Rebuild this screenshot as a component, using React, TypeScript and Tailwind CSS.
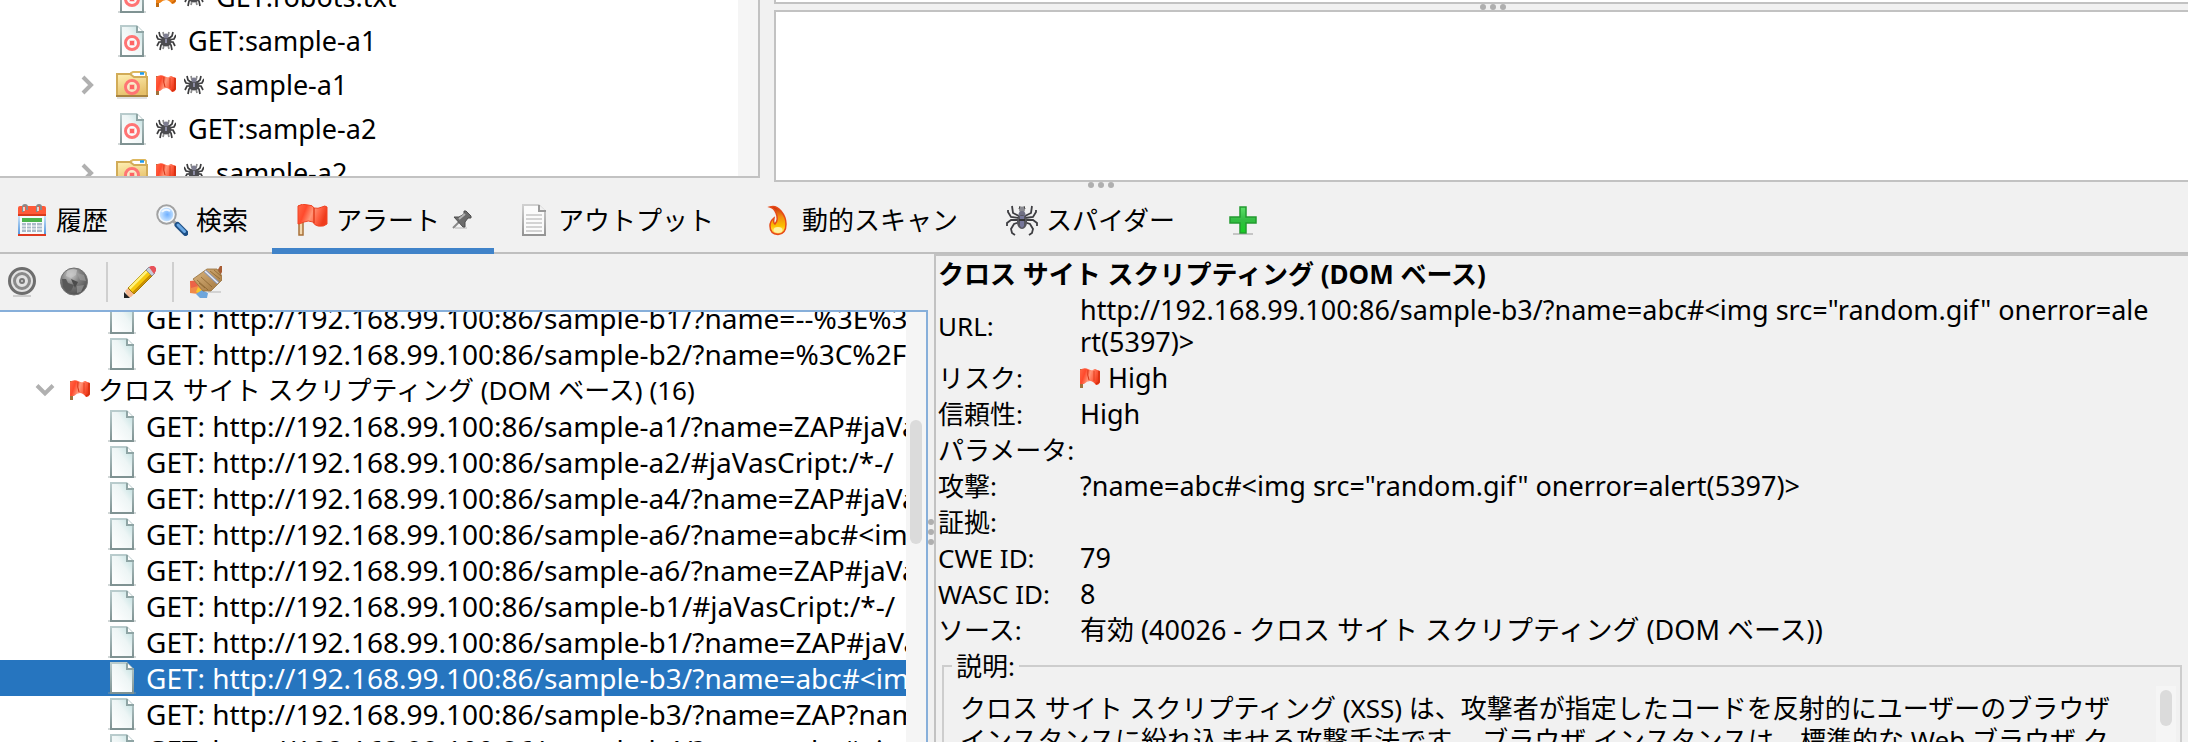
import React from "react";

type IconProps = { className?: string };

function Gradients() {
  return (
    <svg className="absolute h-0 w-0" aria-hidden="true">
      <defs>
        <linearGradient id="paper" x1="1" y1="0" x2="0.1" y2="0.9">
          <stop offset="0" stopColor="#b9dcdc" />
          <stop offset="0.45" stopColor="#edf5f5" />
          <stop offset="1" stopColor="#ffffff" />
        </linearGradient>
        <linearGradient id="paperEdge" x1="0" y1="0" x2="0" y2="1">
          <stop offset="0" stopColor="#b9cccd" />
          <stop offset="1" stopColor="#7f9292" />
        </linearGradient>
        <linearGradient id="grayEdge" x1="0" y1="0" x2="0" y2="1">
          <stop offset="0" stopColor="#d0d0d0" />
          <stop offset="1" stopColor="#949494" />
        </linearGradient>
        <linearGradient id="folder" x1="0" y1="0" x2="0.3" y2="1">
          <stop offset="0" stopColor="#fff0b4" />
          <stop offset="1" stopColor="#e6c06a" />
        </linearGradient>
        <linearGradient id="redFlag" x1="0" y1="0" x2="1" y2="0.3">
          <stop offset="0" stopColor="#ff6a4a" />
          <stop offset="0.3" stopColor="#ff4a2c" />
          <stop offset="0.55" stopColor="#ff9678" />
          <stop offset="0.78" stopColor="#ff6446" />
          <stop offset="1" stopColor="#f03c1c" />
        </linearGradient>
        <linearGradient id="calBody" x1="0" y1="0" x2="0" y2="1">
          <stop offset="0" stopColor="#cfe6fa" />
          <stop offset="1" stopColor="#4f93dc" />
        </linearGradient>
        <radialGradient id="lens" cx="0.55" cy="0.5" r="0.6">
          <stop offset="0" stopColor="#6fb0ff" />
          <stop offset="0.5" stopColor="#b4d8ff" />
          <stop offset="1" stopColor="#e6f4ff" />
        </radialGradient>
        <linearGradient id="flame" x1="0" y1="0" x2="0" y2="1">
          <stop offset="0" stopColor="#c8280e" />
          <stop offset="0.35" stopColor="#f08a10" />
          <stop offset="0.7" stopColor="#fcc000" />
          <stop offset="0.85" stopColor="#ffe040" />
          <stop offset="1" stopColor="#ff9030" />
        </linearGradient>
        <linearGradient id="plus" x1="0" y1="0" x2="0" y2="1">
          <stop offset="0" stopColor="#5ce06a" />
          <stop offset="0.5" stopColor="#34bc44" />
          <stop offset="1" stopColor="#14d020" />
        </linearGradient>
        <radialGradient id="globe" cx="0.38" cy="0.25" r="0.8">
          <stop offset="0" stopColor="#cccccc" />
          <stop offset="0.45" stopColor="#808080" />
          <stop offset="1" stopColor="#4c4c4c" />
        </radialGradient>
        <linearGradient id="broom" x1="0" y1="0" x2="1" y2="1">
          <stop offset="0" stopColor="#dcb680" />
          <stop offset="1" stopColor="#a0743c" />
        </linearGradient>
      </defs>
    </svg>
  );
}

function Paper() {
  return (
    <>
      <path d="M2 31h28" stroke="#8d9c9c" strokeOpacity="0.4" strokeWidth="2" />
      <path d="M5 1H20.500L27 7.500V31H5Z" fill="url(#paper)" stroke="url(#paperEdge)" strokeWidth="2" />
      <path d="M21 1V7H27Z" fill="#ffffff" />
      <path d="M21 1V7H28" fill="none" stroke="#8fa5a5" strokeWidth="2" />
    </>
  );
}

function Target({ cy }: { cy: number }) {
  return (
    <>
      <circle cx="16" cy={cy} r="6.500" fill="#ffffff" fillOpacity="0.55" stroke="#ff7474" strokeWidth="3" />
      <rect x="14" y={cy - 2} width="4" height="4" fill="#ff6464" stroke="#ff6464" strokeOpacity="0.35" strokeWidth="1.500" />
    </>
  );
}

function DocIcon({ className }: IconProps) {
  return (
    <svg viewBox="0 0 32 32" className={className} aria-hidden="true">
      <Paper />
    </svg>
  );
}

function TargetDocIcon({ className }: IconProps) {
  return (
    <svg viewBox="0 0 32 32" className={className} aria-hidden="true">
      <Paper />
      <Target cy={18} />
    </svg>
  );
}

function TargetFolderIcon({ className }: IconProps) {
  return (
    <svg viewBox="0 0 32 32" className={className} aria-hidden="true">
      <path d="M1 29h30" stroke="#000" strokeOpacity="0.12" strokeWidth="2" />
      <path d="M15 7V4L17 3H29L30 4V8H15Z" fill="#ffffff" stroke="#ddb860" strokeWidth="2" />
      <path d="M24 4.500h4" stroke="#1e9cf0" strokeWidth="2.500" />
      <path d="M1 5H14L18 8H31V27H1Z" fill="url(#folder)" stroke="#d2ac58" strokeWidth="2" />
      <path d="M0 27H32" stroke="#a88440" strokeWidth="2" />
      <Target cy={18} />
    </svg>
  );
}

function SmallFlagIcon({ className, orange }: IconProps & { orange?: boolean }) {
  return (
    <svg viewBox="0 0 20 20" className={className} aria-hidden="true">
      <path d="M1.500 1V20" stroke={orange ? "#c06a10" : "#a0723c"} strokeWidth="3" />
      <path d="M0 2Q4-1 8 1T13 2Q15 0 17 2Q20 2 20 4V14Q19 17 16 17Q13 13 10 13Q7 13 4 16H0Z" fill={orange ? "#f08418" : "url(#redFlag)"} />
      <path d="M8 2Q7 7 9 12" stroke={orange ? "#c86408" : "#d63214"} strokeWidth="1" fill="none" />
      <path d="M14 3V13" stroke={orange ? "#c86408" : "#e0401e"} strokeWidth="1" fill="none" />
      <path d="M19 3V14L16 16" stroke={orange ? "#c86408" : "#d23010"} strokeWidth="1.500" fill="none" />
    </svg>
  );
}

function SmallSpiderIcon({ className }: IconProps) {
  return (
    <svg viewBox="0 0 20 20" className={className} aria-hidden="true">
      <g fill="none" stroke="#3c3c3e" strokeWidth="1.700">
        <path d="M9 9L4 5L3 1M8 9L2 8L0 4M8 11L3 11L1 15M9 12L5 14L4 19" />
        <path d="M11 9L16 5L17 1M12 9L18 8L20 4M12 11L17 11L19 15M11 12L15 14L16 19" />
        <path d="M8 5L7 1M12 5L13 1M8 14L7 18M12 14L13 18" strokeOpacity="0.6" />
      </g>
      <ellipse cx="10" cy="10.500" rx="5.500" ry="5" fill="#4c4c50" />
      <circle cx="10" cy="5" r="2.500" fill="#7d7d90" />
      <path d="M9 8h2v4h-2z" fill="#8c8ca4" />
    </svg>
  );
}

function FlagIcon({ className }: IconProps) {
  return (
    <svg viewBox="0 0 32 32" className={className} aria-hidden="true">
      <path d="M3 2H7V31H3Z" fill="#f2d8b0" stroke="#a87038" strokeWidth="1.500" />
      <path d="M2 2Q6-1 12 1Q17 1 18 4Q22 5 26 3Q29 1 31 3V20Q28 23 22 22Q18 21 17 18Q12 16 8 18Q4 20 2 20Z" fill="url(#redFlag)" stroke="#f04424" strokeWidth="1" />
      <path d="M18 4V19" stroke="#e03c1c" strokeWidth="1.500" />
    </svg>
  );
}

function CalendarIcon({ className }: IconProps) {
  return (
    <svg viewBox="0 0 32 32" className={className} aria-hidden="true">
      <rect x="2" y="11" width="28" height="20" fill="url(#calBody)" />
      <rect x="4" y="12" width="24" height="18" fill="#f6fafc" />
      <path d="M2 4Q2 2 4 2H28Q30 2 30 4V11H2Z" fill="#ff5a38" />
      <path d="M2 10H30V12H2Z" fill="#d83a1c" />
      <path d="M2 30H30V32H2Z" fill="#e03a20" />
      <rect x="6" y="14" width="20" height="4" fill="#4cb44c" />
      <rect x="6" y="19" width="20" height="9" fill="#a9bac8" />
      <path d="M6 22H26M6 25H26M10.500 19V28M15.500 19V28M20.500 19V28" stroke="#ffffff" strokeWidth="1" />
      <g fill="none" strokeWidth="2">
        <path d="M7 8V3Q7 1 9 1T11 3V6" stroke="#8a8a8a" />
        <path d="M21 8V3Q21 1 23 1T25 3V6" stroke="#8a8a8a" />
      </g>
      <path d="M8 3V7M22 3V7" stroke="#f4f4f4" strokeWidth="1.500" />
    </svg>
  );
}

function SearchIcon({ className }: IconProps) {
  return (
    <svg viewBox="0 0 32 32" className={className} aria-hidden="true">
      <path d="M17 17L22 21" stroke="#a8a8a8" strokeWidth="3" />
      <path d="M21.500 21L29.500 29" stroke="#1d4f86" strokeWidth="6" strokeLinecap="round" />
      <path d="M22 21L28.500 27.500" stroke="#6aa8e4" strokeWidth="3" strokeLinecap="round" />
      <circle cx="10.500" cy="10.500" r="9" fill="url(#lens)" stroke="#a2a2a2" strokeWidth="2.500" />
      <circle cx="10.500" cy="10.500" r="7.500" fill="none" stroke="#f4f8fc" strokeWidth="1.500" />
      <path d="M6 8Q9 4 14 7" stroke="#ffffff" strokeWidth="2" fill="none" strokeOpacity="0.8" />
    </svg>
  );
}

function OutputIcon({ className }: IconProps) {
  return (
    <svg viewBox="0 0 32 32" className={className} aria-hidden="true">
      <path d="M5 1H20.500L27 7.500V31H5Z" fill="#fbfbfb" stroke="url(#grayEdge)" strokeWidth="2" />
      <path d="M21 1V7H28" fill="#f0f0f0" stroke="#9a9a9a" strokeWidth="2" />
      <path d="M8 11H24M8 15H24M8 19H24M8 23H24M8 27H24" stroke="#c6c6c6" strokeWidth="1.500" />
    </svg>
  );
}

function FlameIcon({ className }: IconProps) {
  return (
    <svg viewBox="0 0 32 32" className={className} aria-hidden="true">
      <path d="M8 3Q14 1 19 7Q24 13 24 20Q24 30 16 30.500Q8 30 8 22Q8 17 12 14Q11 19 13 20Q17 16 14 9Q12 4 8 3Z" fill="url(#flame)" stroke="#e64a18" strokeWidth="1.500" />
      <ellipse cx="16" cy="26" rx="4.500" ry="3" fill="#fff2a0" />
    </svg>
  );
}

function SpiderIcon({ className }: IconProps) {
  return (
    <svg viewBox="0 0 32 32" className={className} aria-hidden="true">
      <g fill="none" stroke="#3e3e42" strokeWidth="1.800">
        <path d="M13 12L7 9L6 2M13 14L5 13L2 8V6M13 16H5L1 19V22M14 18L8 20L5 25L6 29L9 31" />
        <path d="M19 12L25 9L26 2M19 14L27 13L30 8V6M19 16H27L31 19V22M18 18L24 20L27 25L26 29L23 31" />
        <path d="M12 13H20M11 17H21" />
      </g>
      <circle cx="16" cy="5.500" r="3" fill="#8c8c92" />
      <path d="M14 2L13 5M18 2L19 5" stroke="#444" strokeWidth="1" />
      <ellipse cx="16" cy="11" rx="3.500" ry="4" fill="#707084" />
      <ellipse cx="16" cy="18" rx="5" ry="7" fill="#55555c" />
      <path d="M14 12H18V22L16 24L14 22Z" fill="#76769a" />
      <path d="M13 16H19" stroke="#333" strokeWidth="2" />
    </svg>
  );
}

function PinIcon({ className }: IconProps) {
  return (
    <svg viewBox="0 0 20 20" className={className} aria-hidden="true">
      <path d="M3 18h12" stroke="#000" strokeOpacity="0.12" strokeWidth="2" />
      <path d="M1 18L8 11" stroke="#8a8a8a" strokeWidth="2" />
      <path d="M2 7H7L12 4L12 1H14L19 6V8H16L13 12V17H11Z" fill="#6c6c6c" stroke="#4e4e4e" strokeWidth="1" />
      <path d="M7 9L13 4" stroke="#b4b4b4" strokeWidth="2" />
    </svg>
  );
}

function PlusIcon({ className }: IconProps) {
  return (
    <svg viewBox="0 0 32 32" className={className} aria-hidden="true">
      <path d="M6 30H26" stroke="#000" strokeOpacity="0.18" strokeWidth="2" />
      <path d="M13 3H19V13H29V19H19V29H13V19H3V13H13Z" fill="url(#plus)" stroke="#239a30" strokeWidth="1.500" />
    </svg>
  );
}

function GrayTargetIcon({ className }: IconProps) {
  return (
    <svg viewBox="0 0 32 32" className={className} aria-hidden="true">
      <path d="M7 30H25" stroke="#000" strokeOpacity="0.15" strokeWidth="2" />
      <g fill="#e2e2e2">
        <circle cx="16" cy="15" r="12.500" stroke="#6e6e6e" strokeWidth="3" />
        <circle cx="16" cy="15" r="7.500" stroke="#8a8a8a" strokeWidth="3" />
      </g>
      <circle cx="16" cy="15" r="3" fill="#777777" />
      <circle cx="16" cy="15" r="1" fill="#d0d0d0" />
    </svg>
  );
}

function GlobeIcon({ className }: IconProps) {
  return (
    <svg viewBox="0 0 32 32" className={className} aria-hidden="true">
      <circle cx="16" cy="15.500" r="13.500" fill="url(#globe)" stroke="#707070" strokeWidth="1" />
      <path d="M9 5Q14 2 19 4L18 9L13 12L8 10Z" fill="#c8c8c8" fillOpacity="0.7" />
      <path d="M19 7L26 9L28 15L22 14Z" fill="#a2a2a2" fillOpacity="0.6" />
      <path d="M4 13L8 13L10 17L16 19L13 25L9 26L5 21Z" fill="#585858" />
      <path d="M13 13L20 16L17 22Z" fill="#4c4c4c" />
      <path d="M19 20L26 19L23 26L19 27Z" fill="#969696" fillOpacity="0.7" />
    </svg>
  );
}

function PencilIcon({ className }: IconProps) {
  return (
    <svg viewBox="0 0 32 32" className={className} aria-hidden="true">
      <path d="M1 25L4 22L10 28L7 31H4Z" fill="#f6b890" />
      <path d="M0 32V26L6 32Z" fill="#222222" />
      <path d="M4 22L23 3L29 9L10 28Z" fill="#f6c80c" stroke="#a07808" strokeWidth="1" />
      <path d="M5.500 22.500L24 4" stroke="#fff27a" strokeWidth="2.500" />
      <path d="M9 27L28 8" stroke="#c88c00" strokeWidth="2" />
      <path d="M22 4L25 1L31 7L28 10Z" fill="#c8ccd8" stroke="#7c8090" strokeWidth="0.800" />
      <path d="M25 1L27 0H30L32 2V5L30 8Z" fill="#e8525a" />
    </svg>
  );
}

function BroomIcon({ className }: IconProps) {
  return (
    <svg viewBox="0 0 32 32" className={className} aria-hidden="true">
      <path d="M18 26H31" stroke="#000" strokeOpacity="0.12" strokeWidth="2" />
      <path d="M0 15L7 14L13 26L8 28L0 27Z" fill="#f08a4a" />
      <path d="M0 15L5 15L8 20L1 22Z" fill="#ec6248" />
      <path d="M8 21L14 26L10 28L6 26Z" fill="#f8c828" />
      <path d="M6 28L12 24L18 27L17 32H10Z" fill="#6ea6dc" />
      <path d="M26 7L30 0H32V6L30 10Z" fill="#a85c34" />
      <path d="M3 13L17 3L27 3L32 10V14L21 25L13 25Z" fill="url(#broom)" stroke="#94703c" strokeWidth="0.800" />
      <path d="M7 14L18 24M11 11L22 21M9 17L15 22M20 5L30 13M24 4L31 10" stroke="#7c5824" strokeWidth="0.900" strokeOpacity="0.7" />
      <path d="M15 5L28 17" stroke="#8c96b0" strokeWidth="3.500" />
      <path d="M15 5L28 17" stroke="#e8ecf4" strokeWidth="1.500" />
    </svg>
  );
}

function Chevron({ down }: { down?: boolean }) {
  return (
    <svg viewBox="0 0 20 20" className="h-5 w-5" aria-hidden="true">
      <path d={down ? "M2 5.500L10 13.500L18 5.500" : "M5 2L13 10L5 18"} fill="none" stroke="#b0b0b0" strokeWidth="4" />
    </svg>
  );
}

function Grip({ vertical }: { vertical?: boolean }) {
  return (
    <span className={vertical ? "flex flex-col gap-1" : "flex gap-1"}>
      {[0, 1, 2].map((i) => (
        <span key={i} className="h-1.5 w-1.5 rounded-full bg-[#afafaf]" />
      ))}
    </span>
  );
}

const sites = [
  { folder: false, flag: "orange", label: "GET:robots.txt" },
  { folder: false, flag: "", label: "GET:sample-a1" },
  { folder: true, flag: "red", label: "sample-a1" },
  { folder: false, flag: "", label: "GET:sample-a2" },
  { folder: true, flag: "red", label: "sample-a2" },
];

const base = "GET: http://192.168.99.100:86/";
const before = [base + "sample-b1/?name=--%3E%3", base + "sample-b2/?name=%3C%2Fs"];
const alerts = [
  "sample-a1/?name=ZAP#jaVa",
  "sample-a2/#jaVasCript:/*-/",
  "sample-a4/?name=ZAP#jaVa",
  "sample-a6/?name=abc#<im",
  "sample-a6/?name=ZAP#jaVa",
  "sample-b1/#jaVasCript:/*-/",
  "sample-b1/?name=ZAP#jaVa",
  "sample-b3/?name=abc#<im",
  "sample-b3/?name=ZAP?nam",
  "sample-b4/?name=abc#<im",
].map((s) => base + s);
const selected = 7;

function AlertRow({ text, active }: { text: string; active?: boolean }) {
  return (
    <li
      role="treeitem"
      aria-selected={!!active}
      className={
        active
          ? "flex h-9 items-center gap-2 bg-[#2675bf] pl-[106px] text-[28px] text-white"
          : "flex h-9 items-center gap-2 pl-[106px] text-[28px]"
      }
    >
      <DocIcon className="h-8 w-8 shrink-0" />
      <span>{text}</span>
    </li>
  );
}

const tabs = [
  { label: "履歴", Icon: CalendarIcon },
  { label: "検索", Icon: SearchIcon },
  { label: "アラート", Icon: FlagIcon, pinned: true },
  { label: "アウトプット", Icon: OutputIcon },
  { label: "動的スキャン", Icon: FlameIcon },
  { label: "スパイダー", Icon: SpiderIcon },
];

const details: [string, React.ReactNode][] = [
  [
    "リスク:",
    <span className="flex items-center gap-2">
      <SmallFlagIcon className="h-5 w-5" />
      High
    </span>,
  ],
  ["信頼性:", "High"],
  ["パラメータ:", ""],
  ["攻撃:", '?name=abc#<img src="random.gif" onerror=alert(5397)>'],
  ["証拠:", ""],
  ["CWE ID:", "79"],
  ["WASC ID:", "8"],
  ["ソース:", "有効 (40026 - クロス サイト スクリプティング (DOM ベース))"],
];

export default function App() {
  return (
    <div
      lang="ja"
      className="flex h-screen flex-col overflow-hidden bg-[#f1f1f1] font-['Noto_Sans','Noto_Sans_CJK_JP',sans-serif] text-[26px] leading-8 whitespace-nowrap text-black"
    >
      <Gradients />

      <div className="flex h-[182px] shrink-0 gap-3.5">
        <section aria-label="サイト" className="mb-1 flex w-[760px] shrink-0 border-r-2 border-b-2 border-[#c2c2c2] bg-white">
          <div className="flex flex-1 flex-col justify-end overflow-hidden">
            <ul role="tree" className="-mb-[19px] text-[27px]">
              {sites.map((s) => (
                <li key={s.label} role="treeitem" aria-selected={false} className="flex h-11 items-center pl-[78px]">
                  <span className="flex w-[38px] shrink-0">{s.folder && <Chevron />}</span>
                  {s.folder ? <TargetFolderIcon className="h-8 w-8" /> : <TargetDocIcon className="h-8 w-8" />}
                  <span className="mr-3 ml-2 flex gap-2">
                    {s.flag && <SmallFlagIcon className="h-5 w-5" orange={s.flag === "orange"} />}
                    <SmallSpiderIcon className="h-5 w-5" />
                  </span>
                  <span>{s.label}</span>
                </li>
              ))}
            </ul>
          </div>
          <div className="w-5 bg-[#f5f5f5]" />
        </section>
        <div className="flex flex-1 flex-col">
          <div className="h-1 border-b-2 border-l-2 border-[#c2c2c2] bg-white" />
          <div className="flex h-1.5 justify-center pl-6">
            <Grip />
          </div>
          <div className="flex-1 border-2 border-r-0 border-[#c2c2c2] bg-white" />
        </div>
      </div>
      <div className="flex h-2 shrink-0 justify-center pl-3.5">
        <Grip />
      </div>

      <nav role="tablist" className="flex h-16 shrink-0 border-b-2 border-[#bfbfbf]">
        {tabs.map(({ label, Icon, pinned }, i) => (
          <button
            key={label}
            type="button"
            role="tab"
            aria-selected={!!pinned}
            className={
              pinned
                ? "-mb-0.5 flex items-center gap-2 border-b-6 border-[#4083c9] pt-0.5 pr-[22px] pl-6"
                : i === 0
                  ? "-mb-0.5 flex items-center gap-2 border-b-6 border-transparent pt-0.5 pr-6 pl-4"
                  : "-mb-0.5 flex items-center gap-2 border-b-6 border-transparent px-6 pt-0.5"
            }
          >
            <Icon className="h-8 w-8" />
            {label}
            {pinned && <PinIcon className="ml-1 h-5 w-5" />}
          </button>
        ))}
        <button type="button" aria-label="タブを追加" className="-mb-0.5 flex items-center border-b-6 border-transparent px-7 pt-0.5">
          <PlusIcon className="h-8 w-8" />
        </button>
      </nav>

      <div className="flex min-h-0 flex-1">
        <div className="flex w-[928px] shrink-0 flex-col">
          <div className="flex h-14 shrink-0 items-center pl-1.5">
            <button type="button" aria-label="スコープ"><GrayTargetIcon className="h-8 w-8" /></button>
            <button type="button" aria-label="サイトのリンク" className="ml-5"><GlobeIcon className="h-8 w-8" /></button>
            <span className="mx-4 h-10 w-0.5 bg-[#cfcfcf]" />
            <button type="button" aria-label="編集"><PencilIcon className="h-8 w-8" /></button>
            <span className="mx-4 h-10 w-0.5 bg-[#cfcfcf]" />
            <button type="button" aria-label="クリア"><BroomIcon className="h-8 w-8" /></button>
          </div>
          <section aria-label="アラート" className="flex min-h-0 flex-1 border-t-2 border-r-2 border-[#87afda] bg-white">
            <div className="flex-1 overflow-hidden">
              <ul role="tree" className="-mt-3">
                {before.map((t) => (
                  <AlertRow key={t} text={t} />
                ))}
                <li role="treeitem" aria-selected={false} className="flex h-9 items-center pl-[35px]">
                  <Chevron down />
                  <SmallFlagIcon className="mr-2 ml-[15px] h-5 w-5" />
                  <span>クロス サイト スクリプティング (DOM ベース) (16)</span>
                </li>
                {alerts.map((t, i) => (
                  <AlertRow key={t} text={t} active={i === selected} />
                ))}
              </ul>
            </div>
            <div className="w-5 bg-[#f5f5f5] px-1 pt-[108px]">
              <div className="h-[124px] rounded-full bg-[#dbdbdb]" />
            </div>
          </section>
        </div>
        <div className="flex w-1.5 shrink-0 items-center pt-[68px]">
          <Grip vertical />
        </div>

        <section aria-label="アラート詳細" className="flex min-w-0 flex-1 flex-col overflow-hidden border-t-2 border-l-2 border-[#c2c2c2] pr-1.5 pl-0.5">
          <h1 className="flex h-9 shrink-0 items-center font-bold">クロス サイト スクリプティング (DOM ベース)</h1>
          <dl className="shrink-0">
            <div className="flex h-[68px] items-center">
              <dt className="w-[142px] shrink-0">URL:</dt>
              <dd className="text-[27px]">
                {'http://192.168.99.100:86/sample-b3/?name=abc#<img src="random.gif" onerror=ale'}
                <br />
                {"rt(5397)>"}
              </dd>
            </div>
            {details.map(([name, value]) => (
              <div key={name} className="flex h-9 items-center">
                <dt className="w-[142px] shrink-0">{name}</dt>
                <dd className="text-[27px]">{value}</dd>
              </div>
            ))}
          </dl>
          <fieldset className="mt-0.5 ml-1 shrink-0 border-2 border-[#cdcdcd] pl-4">
            <legend className="-ml-2 px-1">説明:</legend>
            <div className="flex h-32 pt-1 pr-1">
              <p className="flex-1 overflow-hidden pt-1.5">
                クロス サイト スクリプティング (XSS) は、攻撃者が指定したコードを反射的にユーザーのブラウザ
                <br />
                インスタンスに紛れ込ませる攻撃手法です。 ブラウザ インスタンスは、標準的な Web ブラウザ ク
              </p>
              <div className="w-5 bg-[#f5f5f5] px-1 pt-1">
                <div className="h-9 rounded-full bg-[#dbdbdb]" />
              </div>
            </div>
          </fieldset>
        </section>
      </div>
    </div>
  );
}
